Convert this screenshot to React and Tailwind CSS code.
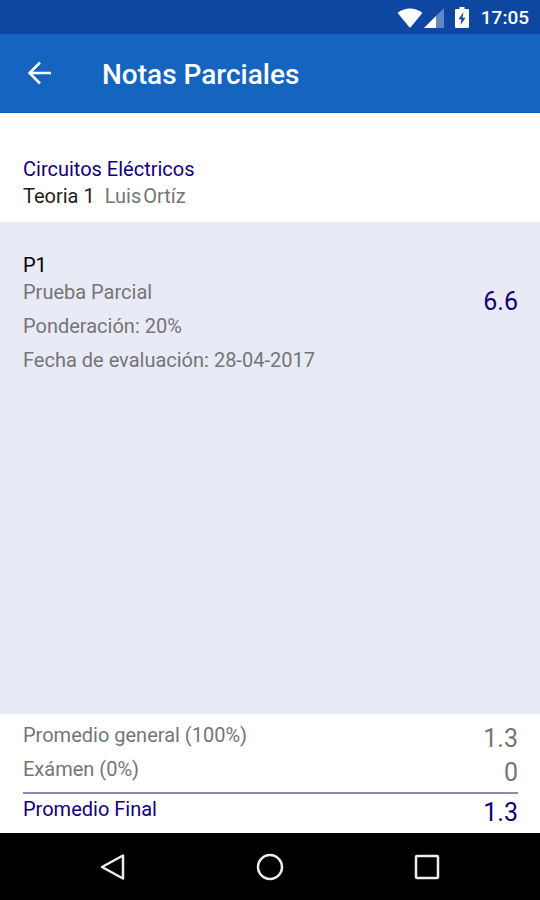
const evaluations = [
  {
    id: 'P1',
    type: 'Prueba Parcial',
    weight: '20%',
    date: '28-04-2017',
    grade: '6.6',
  },
];

const averages = [
  { label: 'Promedio general (100%)', value: '1.3' },
  { label: 'Exámen (0%)', value: '0' },
];

function StatusBar() {
  return (
    <div className="h-[34px] shrink-0 bg-[#0d47a1] pt-px pr-[11px] flex items-center justify-end text-white">
      <svg className="w-[26px] h-5" viewBox="0 0 26 20" fill="currentColor">
        <path d="M13 20 .6 5C3.8 2.200 8.200.6 13 .6S22.200 2.200 25.400 5z" />
      </svg>
      <svg className="ml-px w-5 h-5" viewBox="0 0 20 20" fill="currentColor">
        <path d="M20 0v20H0z" opacity=".35" />
        <path d="M12 8v12H0z" />
      </svg>
      <svg className="ml-[11px] w-[14px] h-[21px]" viewBox="0 0 14 21">
        <path
          d="M4.500 0h5v2H13a1 1 0 0 1 1 1v17a1 1 0 0 1-1 1H1a1 1 0 0 1-1-1V3a1 1 0 0 1 1-1h3.500z"
          fill="currentColor"
        />
        <path d="M8.500 5 3.500 12.200h3L5.500 18l5-7.200h-3z" fill="#0d47a1" />
      </svg>
      <span className="ml-3 text-[19px] leading-6 font-medium">17:05</span>
    </div>
  );
}

function AppBar() {
  return (
    <header className="h-[79px] shrink-0 bg-[#1565c0] border-b border-[#0d56b0] pt-1 pl-7 flex items-center text-white">
      <button type="button" aria-label="Volver" className="mb-1">
        <svg className="w-6 h-6" viewBox="0 0 24 24" fill="none" stroke="currentColor" strokeWidth="2.500">
          <path d="M23 12H2M12 1.500 1.500 12 12 22.500" />
        </svg>
      </button>
      <h1 className="ml-[50px] text-[28px] leading-8 font-medium">Notas Parciales</h1>
    </header>
  );
}

function EvaluationRow({ evaluation }) {
  return (
    <li className="flex items-center justify-between">
      <div>
        <p className="text-black">{evaluation.id}</p>
        <p>{evaluation.type}</p>
        <p className="mt-[7px]">Ponderación: {evaluation.weight}</p>
        <p className="mt-[7px]">Fecha de evaluación: {evaluation.date}</p>
      </div>
      <span className="mb-[22px] text-[25px] leading-[34px] text-[#12007e]">{evaluation.grade}</span>
    </li>
  );
}

function NavBar() {
  return (
    <nav className="h-[67px] shrink-0 bg-black px-[34px] flex items-center text-[#eeeeee]">
      <button type="button" aria-label="Atrás" className="flex-1 flex justify-center">
        <svg className="w-7 h-7" viewBox="0 0 28 28" fill="none" stroke="currentColor" strokeWidth="2.500" strokeLinejoin="round">
          <path d="M24 2.500v23L3 14z" />
        </svg>
      </button>
      <button type="button" aria-label="Inicio" className="flex-1 flex justify-center">
        <svg className="w-7 h-7" viewBox="0 0 28 28" fill="none" stroke="currentColor" strokeWidth="2.500">
          <circle cx="14" cy="14" r="12" />
        </svg>
      </button>
      <button type="button" aria-label="Recientes" className="flex-1 flex justify-center">
        <svg className="w-7 h-7" viewBox="0 0 28 28" fill="none" stroke="currentColor" strokeWidth="2.500">
          <rect x="3" y="3" width="22" height="22" rx="1" />
        </svg>
      </button>
    </nav>
  );
}

export default function App() {
  return (
    <div className="min-h-screen flex flex-col bg-white font-['Roboto',sans-serif] text-[20px] leading-[27px] text-[#757575]">
      <StatusBar />
      <AppBar />

      <section className="px-[23px] pt-[43px] pb-3">
        <h2 className="text-[#12007e]">Circuitos Eléctricos</h2>
        <p className="flex gap-[10px]">
          <span className="text-[#212121]">Teoria 1</span>
          <span className="flex gap-[2px]">
            <span>Luis</span>
            <span>Ortíz</span>
          </span>
        </p>
      </section>

      <main className="flex-1 bg-[#e8eaf6] pl-[23px] pr-[22px] pt-[30px]">
        <ul>
          {evaluations.map(evaluation => (
            <EvaluationRow key={evaluation.id} evaluation={evaluation} />
          ))}
        </ul>
      </main>

      <footer className="pl-[23px] pr-[22px] pt-2 pb-[3px]">
        {averages.map(average => (
          <div key={average.label} className="flex items-start justify-between">
            <span>{average.label}</span>
            <span className="text-[25px] leading-[34px]">{average.value}</span>
          </div>
        ))}
        <div className="mt-[2px] pt-[2px] border-t-2 border-[#8c8cb4] flex items-start justify-between text-[#12007e]">
          <span>Promedio Final</span>
          <span className="text-[25px] leading-[34px]">1.3</span>
        </div>
      </footer>

      <NavBar />
    </div>
  );
}
